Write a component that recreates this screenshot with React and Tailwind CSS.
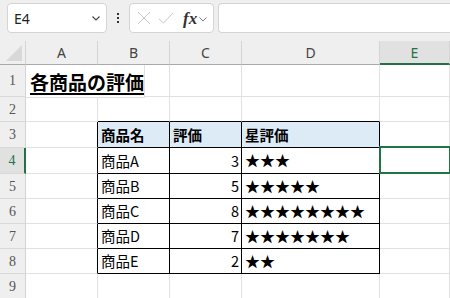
import React from 'react';

const cellFont = { fontFamily: '"Noto Sans CJK JP", "Noto Sans", sans-serif' };

const COLS = ['A', 'B', 'C', 'D', 'E'];
const ROWS = [1, 2, 3, 4, 5, 6, 7, 8, 9];

const data = [
  ['商品A', 3],
  ['商品B', 5],
  ['商品C', 8],
  ['商品D', 7],
  ['商品E', 2],
];

const inTable = (r, c) => r >= 3 && r <= 8 && c >= 1 && c <= 3;

function Cell({ r, c }) {
  const rightBlack = inTable(r, c) || (c === 0 && r >= 3 && r <= 8);
  const bottomBlack = inTable(r, c) || (r === 2 && c >= 1 && c <= 3);
  const border = `${rightBlack ? 'border-r-black' : 'border-r-[#e1e1e1]'} ${
    bottomBlack ? 'border-b-black' : 'border-b-[#e1e1e1]'
  }`;
  const header = r === 3 && inTable(r, c);
  let content = null;
  let align = 'justify-start pl-[3px]';

  if (r === 1 && c === 0) {
    content = (
      <span className="text-[19px] font-bold underline underline-offset-[3px] decoration-[1.5px] whitespace-nowrap text-black">
        各商品の評価
      </span>
    );
    align = 'justify-start pl-[4px] pt-[3px]';
  }
  if (header) {
    content = <span className="font-bold">{['商品名', '評価', '星評価'][c - 1]}</span>;
  }
  if (r >= 4 && r <= 8 && c >= 1 && c <= 3) {
    const [name, score] = data[r - 4];
    if (c === 1) content = name;
    if (c === 2) {
      content = score;
      align = 'justify-end pr-[2px]';
    }
    if (c === 3) content = <span className="text-[15px]">{'★'.repeat(score)}</span>;
  }

  const selected = r === 4 && c === 4;

  return (
    <div
      className={`relative flex items-center border-r border-b ${border} ${align} ${
        header ? 'bg-[#ddebf7]' : 'bg-white'
      } text-[14.5px] text-black overflow-visible whitespace-nowrap ${c === 0 && r === 1 ? 'z-10' : ''}`}
      style={cellFont}
    >
      {content}
      {selected && (
        <div className="absolute -top-[2px] -left-[1px] -right-[2px] -bottom-[1px] border-2 border-[#217346]" />
      )}
    </div>
  );
}

function App() {
  return (
    <div className="w-[450px] h-[298px] overflow-hidden bg-white" style={{ fontFamily: '"Noto Sans", "Open Sans", sans-serif' }}>
      <div className="h-[41px] bg-[#efefef] flex items-start pt-[3px] pl-[7px]">
        <div className="w-[100px] h-[30px] bg-white border border-[#d4d4d4] rounded-[4px] flex items-center justify-between pl-[6px] pr-[4px]">
          <span className="text-[14px] text-[#222]">E4</span>
          <svg width="12" height="12" viewBox="0 0 12 12">
            <path d="M2.5 4.5 L6 8 L9.5 4.5" fill="none" stroke="#444" strokeWidth="1.1" />
          </svg>
        </div>
        <div className="w-[22px] h-[30px] flex flex-col items-center justify-center gap-[2px]">
          <div className="w-[2px] h-[2px] bg-[#333]" />
          <div className="w-[2px] h-[2px] bg-[#333]" />
          <div className="w-[2px] h-[2px] bg-[#333]" />
        </div>
        <div className="w-[85px] h-[30px] bg-white border border-[#d4d4d4] rounded-[4px] flex items-center pl-[6px]">
          <svg width="14" height="14" viewBox="0 0 14 14" className="ml-[1px]">
            <path d="M1 1 L13 13 M13 1 L1 13" stroke="#c6c6c6" strokeWidth="1" fill="none" />
          </svg>
          <svg width="16" height="14" viewBox="0 0 16 14" className="ml-[7px]">
            <path d="M1 8 L5.5 12 L15 2" stroke="#c6c6c6" strokeWidth="1" fill="none" />
          </svg>
          <span
            className="ml-[9px] text-[17px] italic font-bold text-[#333] leading-none"
            style={{ fontFamily: '"Liberation Serif", "DejaVu Serif", serif' }}
          >
            fx
          </span>
          <svg width="10" height="10" viewBox="0 0 10 10" className="ml-[1px] mt-[2px]">
            <path d="M1.5 3.5 L5 7 L8.5 3.5" fill="none" stroke="#777" strokeWidth="1" />
          </svg>
        </div>
        <div className="ml-[4px] flex-1 h-[30px] bg-white border border-r-0 border-[#d4d4d4] rounded-l-[4px]" />
      </div>

      <div className="grid grid-cols-[26px_72px_72px_72px_138px_1fr] grid-rows-[24px_32px_25px_26px_26px_25px_25px_25px_25px_25px]">
        <div className="relative bg-[#efefef] border-r border-b border-r-[#d4d4d4] border-b-[#a9a9a9] flex items-end justify-end pr-[3px] pb-[3px]">
          <svg width="16" height="16" viewBox="0 0 16 16">
            <path d="M16 0 L16 16 L0 16 Z" fill="#d8d8d8" />
          </svg>
        </div>
        {COLS.map((col) => {
          const sel = col === 'E';
          return (
            <div
              key={col}
              className={`flex items-center justify-center text-[14px] border-r ${
                sel
                  ? 'bg-[#e1e1e1] text-[#217346] border-b-2 border-b-[#217346] border-r-[#d4d4d4]'
                  : 'bg-[#efefef] text-[#444] border-b border-b-[#a9a9a9] border-r-[#d4d4d4]'
              }`}
            >
              {col}
            </div>
          );
        })}
        {ROWS.map((r) => (
          <React.Fragment key={r}>
            <div
              className={`flex items-center justify-center text-[14px] border-b border-b-[#d9d9d9] ${
                r === 4
                  ? 'bg-[#e1e1e1] text-[#217346] border-r-2 border-r-[#217346]'
                  : 'bg-[#efefef] text-[#555] border-r border-r-[#d4d4d4]'
              }`}
              style={{ fontFamily: '"Liberation Serif", "DejaVu Serif", serif' }}
            >
              {r}
            </div>
            {COLS.map((col, c) => (
              <div key={col} className={`grid ${c === 0 && r === 1 ? 'z-10' : ''}`}>
                <Cell r={r} c={c} />
              </div>
            ))}
          </React.Fragment>
        ))}
      </div>
    </div>
  );
}

export default App;
